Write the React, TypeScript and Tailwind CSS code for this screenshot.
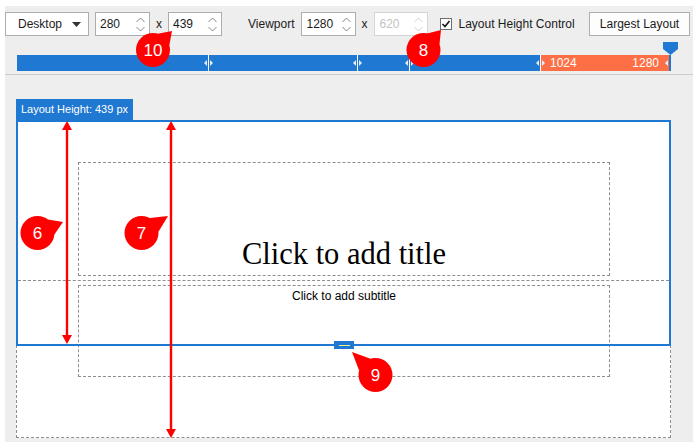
import React from 'react';

const BLUE = '#1f78d1';

function Spin({ muted }: { muted?: boolean }) {
  const c = muted ? '#d2d2d2' : '#858585';
  return (
    <svg width="9" height="15" viewBox="0 0 9 15" fill="none" stroke={c} strokeWidth="1">
      <polyline points="0.5,5 4.5,1 8.5,5" />
      <polyline points="0.5,10 4.5,14 8.5,10" />
    </svg>
  );
}

function NumInput({ value, muted }: { value: string; muted?: boolean }) {
  return (
    <div
      className={`flex items-center justify-between h-[24px] bg-white pl-[4px] pr-[4px] border ${
        muted ? 'border-[#d6d6d6] text-[#c3c3c3]' : 'border-[#adadad] text-[#1b1b1b]'
      }`}
    >
      <span>{value}</span>
      <Spin muted={muted} />
    </div>
  );
}

const TriL = () => (
  <svg width="3" height="6" viewBox="0 0 3 6">
    <path d="M3 0V6L0 3Z" fill="#e4ecf8" />
  </svg>
);
const TriR = () => (
  <svg width="3" height="6" viewBox="0 0 3 6">
    <path d="M0 0V6L3 3Z" fill="#e4ecf8" />
  </svg>
);

function Callout({ cx, cy, tx, ty, n }: { cx: number; cy: number; tx: number; ty: number; n: string }) {
  const a = Math.atan2(ty - cy, tx - cx);
  const r = 17;
  const b1 = `${cx + r * Math.cos(a - 0.5)} ${cy + r * Math.sin(a - 0.5)}`;
  const b2 = `${cx + r * Math.cos(a + 0.5)} ${cy + r * Math.sin(a + 0.5)}`;
  return (
    <g>
      <path d={`M${b1} L${tx} ${ty} L${b2} Z`} fill="#ff0000" />
      <circle cx={cx} cy={cy} r={r} fill="#ff0000" />
      <text
        x={cx}
        y={cy + 6}
        textAnchor="middle"
        fontSize="17"
        fill="#ffffff"
        fontFamily="'Liberation Sans', Arial, sans-serif"
      >
        {n}
      </text>
    </g>
  );
}

function Arrow({ x, y1, y2 }: { x: number; y1: number; y2: number }) {
  return (
    <g fill="#ff0000">
      <line x1={x} y1={y1 + 8} x2={x} y2={y2 - 8} stroke="#ff0000" strokeWidth="2.4" />
      <path d={`M${x} ${y1} L${x - 5} ${y1 + 9} L${x + 5} ${y1 + 9} Z`} />
      <path d={`M${x} ${y2} L${x - 5} ${y2 - 9} L${x + 5} ${y2 - 9} Z`} />
    </g>
  );
}

export default function App() {
  return (
    <div className="relative w-[700px] h-[448px] overflow-hidden bg-white pl-[5px] pt-[6px] font-['Liberation_Sans',Arial,sans-serif] text-[12px] text-[#1b1b1b]">
      <div className="flex flex-col w-[688px] h-[436px] bg-[#eeeeee]">
        {/* Toolbar */}
        <div className="flex flex-col h-[69px] pt-[6px] border-b border-[#cccccc]">
          <div className="flex items-center h-[24px]">
            <div className="flex items-center justify-between w-[84px] h-[24px] bg-white border border-[#adadad] pl-[12px] pr-[7px]">
              <span>Desktop</span>
              <svg width="9" height="5" viewBox="0 0 9 5">
                <path d="M0 0H9L4.5 5Z" fill="#333333" />
              </svg>
            </div>
            <div className="ml-[6px] w-[55px]">
              <NumInput value="280" />
            </div>
            <span className="ml-[6px]">x</span>
            <div className="ml-[6px] w-[54px]">
              <NumInput value="439" />
            </div>
            <span className="ml-[26px]">Viewport</span>
            <div className="ml-[7px] w-[55px]">
              <NumInput value="1280" />
            </div>
            <span className="ml-[5px]">x</span>
            <div className="ml-[7px] w-[54px]">
              <NumInput value="620" muted />
            </div>
            <div className="ml-[12px] flex items-center justify-center w-[12px] h-[12px] bg-white border border-[#6d6d6d]">
              <svg width="10" height="10" viewBox="0 0 10 10" fill="none" stroke="#1b1b1b" strokeWidth="1.7">
                <polyline points="1.5,5 4,7.5 8.5,2" />
              </svg>
            </div>
            <span className="ml-[6px]">Layout Height Control</span>
            <button className="ml-auto mr-[3px] w-[101px] h-[24px] bg-[#fdfdfd] border border-[#adadad] text-[12px]">
              Largest Layout
            </button>
          </div>

          {/* Ruler */}
          <div className="flex ml-[12px] mt-[19px] w-[654px] h-[16px] text-white leading-[16px]">
            <div className="flex items-center justify-end w-[191px] pr-[1px]" style={{ background: BLUE }}>
              <TriL />
            </div>
            <div className="flex items-center justify-between w-[149px] border-l border-white px-[1px]" style={{ background: BLUE }}>
              <TriR />
              <TriL />
            </div>
            <div className="flex items-center justify-between w-[52px] border-l border-white px-[1px]" style={{ background: BLUE }}>
              <TriR />
              <TriL />
            </div>
            <div className="flex items-center justify-between w-[131px] border-l border-white px-[1px]" style={{ background: BLUE }}>
              <TriR />
              <TriL />
            </div>
            <div className="flex items-center w-[129px] border-l border-white bg-[#fe6f45] pl-[1px] pr-[1px]">
              <TriR />
              <span className="ml-[5px]">1024</span>
              <span className="ml-auto mr-[6px]">1280</span>
              <TriL />
            </div>
            <div className="w-[2px] bg-[#1f78d1]" />
          </div>
        </div>

        {/* Canvas */}
        <div className="flex-1 pt-[24px] pl-[11px]">
          <div className="w-[117px] h-[21px] bg-[#1f78d1] text-white text-[11px] leading-[21px] pl-[5px]">
            Layout Height: 439 px
          </div>
          <div className="relative w-[655px] h-[318px]">
            <div className="flex flex-col h-full bg-white border-x border-b border-dashed border-[#8e8e8e]">
              <div className="flex items-end justify-center ml-[61px] mt-[42px] w-[532px] h-[114px] border border-dashed border-[#8e8e8e] pb-[6px]">
                <span className="font-['Liberation_Serif','Times_New_Roman',serif] text-[30.5px] leading-[30px] text-black">
                  Click to add title
                </span>
              </div>
              <div className="mt-[4px] mx-[1px] border-t border-dashed border-[#8e8e8e]" />
              <div className="flex justify-center ml-[61px] mt-[4px] w-[532px] h-[92px] border border-dashed border-[#8e8e8e] pt-[3px]">
                <span className="text-black leading-[14px]">Click to add subtitle</span>
              </div>
            </div>
            {/* layout height frame */}
            <div className="absolute left-0 top-0 w-full h-[226px] border-2 border-[#1f78d1]" />
            <div className="absolute left-[318px] top-[221px] flex items-center justify-center w-[20px] h-[8px] bg-[#1f78d1]">
              <div className="w-[11px] h-[1px] bg-[#f4f08a]" />
            </div>
          </div>
        </div>
      </div>

      {/* annotations */}
      <svg className="absolute left-0 top-0 pointer-events-none" width="700" height="448" viewBox="0 0 700 448">
        <path d="M663 42H678V49L670.5 55L663 49Z" fill={BLUE} />
        <Arrow x={67} y1={121} y2={344} />
        <Arrow x={171} y1={121} y2={438} />
        <Callout cx={153} cy={50} tx={172} ty={31} n="10" />
        <Callout cx={423.5} cy={50} tx={441} ty={30} n="8" />
        <Callout cx={37.5} cy={233} tx={63} ty={222} n="6" />
        <Callout cx={141.5} cy={233} tx={168} ty={216} n="7" />
        <Callout cx={375.5} cy={375} tx={352} ty={352} n="9" />
      </svg>
    </div>
  );
}
